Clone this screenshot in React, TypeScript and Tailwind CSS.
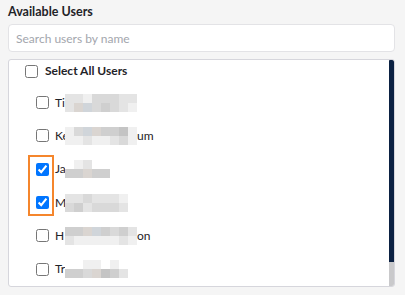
import React from "react";

type Row = { pre: string; post?: string; cells: string[][]; checked: boolean };

const A = "bg-[#f0f0f0]";
const B = "bg-[#e4e4e4]";
const C = "bg-[#d9d9d9]";
const D = "bg-[#cfcfcf]";
const E = "bg-[#c4c4c4]";
const W = "bg-white";
const F = "bg-[#dad5d1]";
const G = "bg-[#d0d5da]";

const rows: Row[] = [
  {
    pre: "Ti",
    checked: false,
    cells: [
      [B, B, A, C, C, C, B, B],
      [B, F, G, C, D, C, B, A],
    ],
  },
  {
    pre: "Ke",
    post: "um",
    checked: false,
    cells: [
      [A, C, G, F, D, D, E, A],
      [A, A, B, A, A, B, C, A],
    ],
  },
  {
    pre: "Ja",
    checked: true,
    cells: [
      [W, A, B, W, W],
      [D, D, F, D, D],
    ],
  },
  {
    pre: "M",
    checked: true,
    cells: [
      [B, B, C, B, B, B, A],
      [C, D, B, C, C, C, B],
    ],
  },
  {
    pre: "H",
    post: "on",
    checked: false,
    cells: [
      [D, D, F, G, D, C, D, B],
      [B, A, A, A, A, A, B, A],
    ],
  },
  {
    pre: "Tr",
    checked: false,
    cells: [
      [W, W, A, A, W, A, W],
      [D, D, C, F, E, D, B],
    ],
  },
];

function Mosaic({ cells }: { cells: string[][] }) {
  return (
    <span className="flex flex-col">
      {cells.map((r, i) => (
        <span key={i} className="flex">
          {r.map((c, j) => (
            <span key={j} className={`block w-[9px] h-[9px] ${c}`} />
          ))}
        </span>
      ))}
    </span>
  );
}

export default function App() {
  return (
    <div
      className="relative w-[405px] h-[295px] bg-[#f5f5f5] px-[8px] pt-[3px] overflow-hidden"
      style={{ fontFamily: 'Lato, "Noto Sans", sans-serif' }}
    >
      <div className="text-[12.5px] leading-[18px] font-bold text-[#1f2328]">Available Users</div>
      <input
        className="mt-[3px] block w-[387px] h-[28px] bg-white border border-[#e3e3e6] rounded-[4px] px-[7px] text-[12px] text-[#1f2328] placeholder:text-[#a3a6ad] outline-none"
        placeholder="Search users by name"
      />
      <div className="mt-[7px] w-[387px] h-[228px] bg-white border border-[#d6d6dc] rounded-[3px] overflow-hidden flex">
        <div className="flex-1 min-w-0">
          <label className="flex items-center h-[22px] pl-[16px] gap-[7px]">
            <input type="checkbox" className="w-[13px] h-[13px]" />
            <span className="text-[12px] font-bold text-[#1f2328]">Select All Users</span>
          </label>
          <div className="mt-[4px] pl-[27px]">
            {rows.map((r, i) => (
              <label key={i} className="flex items-center h-[33.33px] gap-[6px]">
                <input type="checkbox" defaultChecked={r.checked} className="w-[13px] h-[13px]" />
                <span className="flex items-center text-[12px] text-[#1f2328]">
                  <span className="w-[10px] whitespace-nowrap">{r.pre}</span>
                  <Mosaic cells={r.cells} />
                  {r.post && <span>{r.post}</span>}
                </span>
              </label>
            ))}
          </div>
        </div>
        <div className="w-[5px] flex flex-col bg-[#c9c9cb]">
          <div className="h-[202px] bg-[#0b2142] rounded-t-[1px]" />
        </div>
      </div>
      <div className="absolute left-[28px] top-[155px] w-[26px] h-[61px] border-2 border-[#f5862c]" />
    </div>
  );
}
